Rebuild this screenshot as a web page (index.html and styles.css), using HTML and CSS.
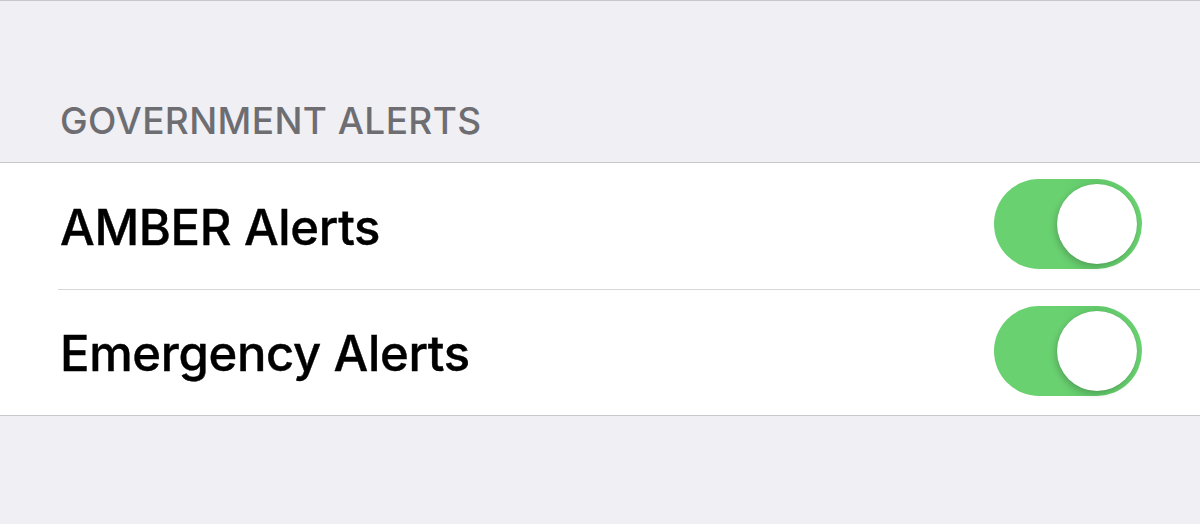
FILE: index.html
```html
<!DOCTYPE html>
<html lang="en">
<head>
    <meta charset="UTF-8">
    <meta name="viewport" content="width=device-width, initial-scale=1.0">
    <title>Government Alerts</title>
    <link rel="stylesheet" href="styles.css">
</head>
<body>
    <div class="settings">
        <div class="section-title">GOVERNMENT ALERTS</div>
        <div class="group">
            <div class="row">
                <span class="label">AMBER Alerts</span>
                <label class="switch on"><span class="knob"></span></label>
            </div>
            <div class="row">
                <span class="label">Emergency Alerts</span>
                <label class="switch on"><span class="knob"></span></label>
            </div>
        </div>
    </div>
</body>
</html>
```

FILE: styles.css
```css
*{margin:0;padding:0;box-sizing:border-box;font-family:'Inter','Liberation Sans',sans-serif}
body{background:#efeff4;height:524px;overflow:hidden}
.settings{border-top:1px solid #c8c7cc}
.section-title{padding:97px 0 0 60px;height:161px;font-size:37px;color:#6d6d72;letter-spacing:0.4px;font-weight:500}
.group{background:#fff;border-top:1px solid #c8c7cc;border-bottom:1px solid #c8c7cc;padding-left:58px}
.row{display:flex;align-items:center;justify-content:space-between;height:127px;padding:0 58px 0 2px;border-bottom:1.5px solid #d8d8dc}
.row:last-child{border-bottom:none;height:125px}
.label{font-size:49px;font-weight:500;color:#000;letter-spacing:-0.35px;margin-top:2px;-webkit-text-stroke:0.4px #000}
.switch{position:relative;width:148px;height:90px;border-radius:45px;background:#e5e5ea;margin-top:-4px}
.switch.on{background:linear-gradient(90deg,#6ad171 0%,#6ad171 45%,#62c96a 70%,#6ad171 100%)}
.knob{position:absolute;top:5px;right:5px;width:80px;height:80px;border-radius:50%;background:#fff;box-shadow:-2px 3px 6px rgba(0,0,0,0.18),0 0 0 0.5px rgba(0,0,0,0.06)}
```
